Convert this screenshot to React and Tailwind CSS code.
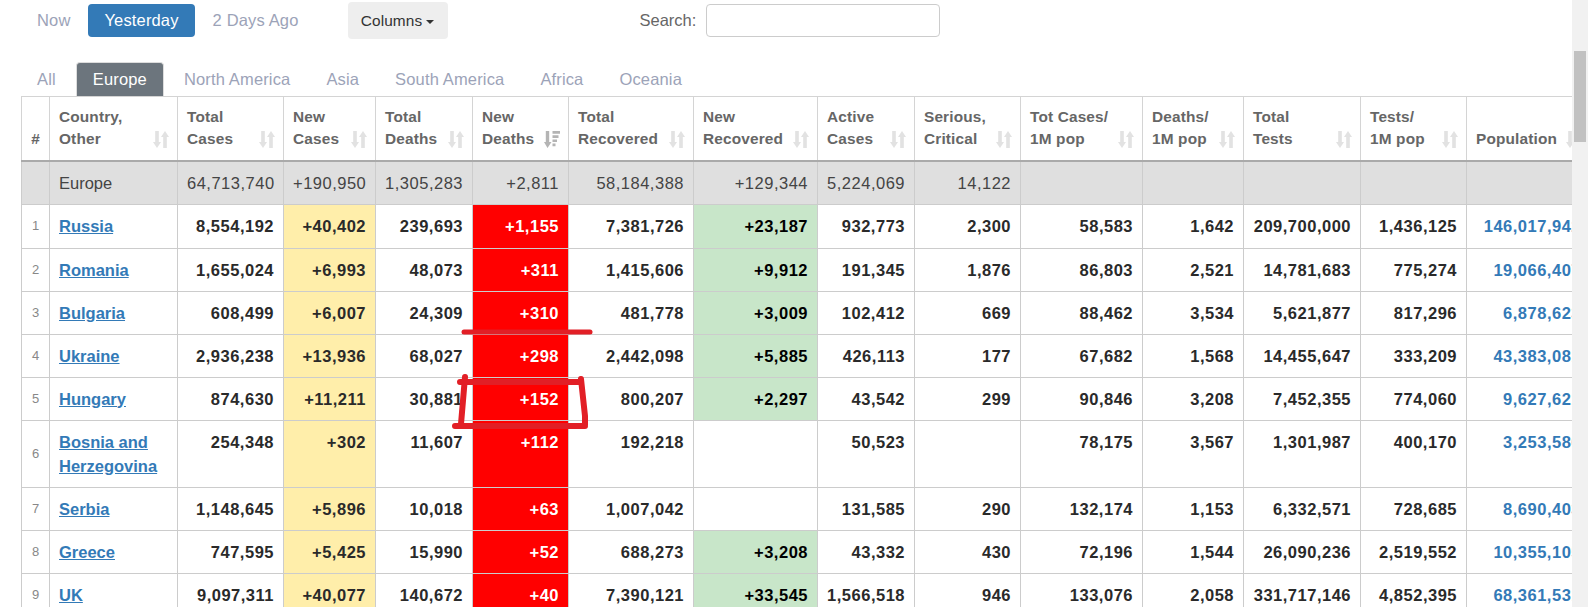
import React from 'react';

const headers = [
  ['Country,', 'Other'],
  ['Total', 'Cases'],
  ['New', 'Cases'],
  ['Total', 'Deaths'],
  ['New', 'Deaths'],
  ['Total', 'Recovered'],
  ['New', 'Recovered'],
  ['Active', 'Cases'],
  ['Serious,', 'Critical'],
  ['Tot Cases/', '1M pop'],
  ['Deaths/', '1M pop'],
  ['Total', 'Tests'],
  ['Tests/', '1M pop'],
  ['', 'Population'],
];

const widths = ['w-[28px]', 'w-[128px]', 'w-[106px]', 'w-[92px]', 'w-[97px]', 'w-[96px]', 'w-[125px]', 'w-[124px]', 'w-[97px]', 'w-[106px]', 'w-[122px]', 'w-[101px]', 'w-[117px]', 'w-[106px]', 'w-[124px]'];

const rows = [
  ['Russia', '8,554,192', '+40,402', '239,693', '+1,155', '7,381,726', '+23,187', '932,773', '2,300', '58,583', '1,642', '209,700,000', '1,436,125', '146,017,942'],
  ['Romania', '1,655,024', '+6,993', '48,073', '+311', '1,415,606', '+9,912', '191,345', '1,876', '86,803', '2,521', '14,781,683', '775,274', '19,066,407'],
  ['Bulgaria', '608,499', '+6,007', '24,309', '+310', '481,778', '+3,009', '102,412', '669', '88,462', '3,534', '5,621,877', '817,296', '6,878,623'],
  ['Ukraine', '2,936,238', '+13,936', '68,027', '+298', '2,442,098', '+5,885', '426,113', '177', '67,682', '1,568', '14,455,647', '333,209', '43,383,081'],
  ['Hungary', '874,630', '+11,211', '30,881', '+152', '800,207', '+2,297', '43,542', '299', '90,846', '3,208', '7,452,355', '774,060', '9,627,621'],
  [['Bosnia and', 'Herzegovina'], '254,348', '+302', '11,607', '+112', '192,218', '', '50,523', '', '78,175', '3,567', '1,301,987', '400,170', '3,253,586'],
  ['Serbia', '1,148,645', '+5,896', '10,018', '+63', '1,007,042', '', '131,585', '290', '132,174', '1,153', '6,332,571', '728,685', '8,690,403'],
  ['Greece', '747,595', '+5,425', '15,990', '+52', '688,273', '+3,208', '43,332', '430', '72,196', '1,544', '26,090,236', '2,519,552', '10,355,105'],
  ['UK', '9,097,311', '+40,077', '140,672', '+40', '7,390,121', '+33,545', '1,566,518', '946', '133,076', '2,058', '331,717,146', '4,852,395', '68,361,531'],
];

const europe = ['Europe', '64,713,740', '+190,950', '1,305,283', '+2,811', '58,184,388', '+129,344', '5,224,069', '14,122', '', '', '', '', ''];

const SortIcon = ({ active }) => (
  <svg viewBox="0 0 16 17" className="w-4 h-[17px] shrink-0 mb-[2px]">
    {active ? (
      <g fill="#b4b4b4">
        <path d="M1.800 0h3.400v11h2.300l-4 6-3.500-6h1.800z" />
        <path d="M8.500 0h7.500v2.700H8.500zM8.500 4.200h6v2.700h-6zM8.500 8.400h4.500v2.700H8.500zM8.500 12.600h3v2.700h-3z" />
      </g>
    ) : (
      <g fill="#e2e2e2">
        <path d="M2.200 0h3.600v11H8l-4 6-4-6h2.200z" />
        <path d="M10.200 17h3.600V6H16l-4-6-4 6h2.200z" />
      </g>
    )}
  </svg>
);

const cellBg = (col, value) => {
  if (col === 2) return 'bg-[#ffeeaa]';
  if (col === 4) return 'bg-[#ff0000] text-white';
  if (col === 6 && value) return 'bg-[#c8e6c9] text-black';
  return '';
};

const tabs = ['North America', 'Asia', 'South America', 'Africa', 'Oceania'];

export default function App() {
  return (
    <div className="flex h-[607px] w-[1588px] overflow-hidden bg-white font-['Liberation_Sans',Arial,sans-serif] text-[16.500px]">
      <div className="relative w-[1572px] shrink-0 overflow-hidden">
        <div className="flex h-[41px] items-center">
          <div className="ml-[21px] flex items-center gap-[2px] tracking-[0.150px] text-[#9ca3b8]">
            <a className="px-4 py-[4px]">Now</a>
            <a className="rounded bg-[#337ab7] px-4 py-[4px] leading-[25px] text-white">Yesterday</a>
            <a className="px-4 py-[4px]">2 Days Ago</a>
          </div>
          <button className="ml-[33px] flex h-[37px] w-[100px] items-center justify-center gap-[4px] rounded bg-[#eeeeee] text-[15.400px] tracking-[0.100px] text-[#333]">
            Columns
            <span className="mt-[2px] border-x-[4px] border-t-[4px] border-x-transparent border-t-[#333]" />
          </button>
          <label className="ml-[192px] text-[#666]">Search:</label>
          <input className="ml-[10px] h-[33px] w-[234px] rounded border border-[#cccccc] bg-white" />
        </div>

        <div className="ml-[21px] mt-[21px] flex h-[34px] items-center gap-[4px] tracking-[0.150px] text-[#9ca3b8]">
          <a className="px-4">All</a>
          <a className="flex h-[34px] items-center rounded-t border border-b-0 border-[#dddddd] bg-[#6c757d] px-4 text-white">Europe</a>
          {tabs.map((tab) => (
            <a key={tab} className="px-4">{tab}</a>
          ))}
        </div>

        <table className="ml-[21px] w-[1570px] table-fixed border-collapse leading-6 text-[#2a2a2a]">
          <colgroup>
            {widths.map((w, i) => <col key={i} className={w} />)}
          </colgroup>
          <thead>
            <tr className="h-[64px]">
              <th className="border border-b-2 border-[#d4d4d4] border-b-[#aaaaaa] pb-[10px] align-bottom text-[15.400px] leading-[22px] text-[#666]">#</th>
              {headers.map((h, i) => (
                <th key={i} className="border border-b-2 border-[#d4d4d4] border-b-[#aaaaaa] pb-[10px] pl-[9px] pr-[8px] text-left align-bottom text-[15.400px] font-bold leading-[22px] tracking-[0.150px] text-[#666]">
                  <div className="flex items-end justify-between">
                    <span className="whitespace-nowrap">{h[0]}<br />{h[1]}</span>
                    <SortIcon active={i === 4} />
                  </div>
                </th>
              ))}
            </tr>
          </thead>
          <tbody>
            <tr className="bg-[#dfdfdf] text-[#444]">
              <td className="border border-[#cccccc]" />
              {europe.map((v, i) => (
                <td key={i} className={i === 0
                  ? 'border border-[#cccccc] px-[9px] py-[9px] text-left'
                  : 'border border-[#cccccc] px-[9px] py-[9px] text-right tracking-[0.500px]'}>{v}</td>
              ))}
            </tr>
            {rows.map((row, r) => (
              <tr key={r} className={r === 0 ? 'h-[44px]' : ''}>
                <td className="border border-[#cccccc] text-center align-middle text-[13px] text-[#888]">{r + 1}</td>
                {row.map((v, i) => {
                  if (i === 0) {
                    return (
                      <td key={i} className="border border-[#cccccc] px-[9px] py-[9px] align-top font-bold text-[#337ab7]">
                        {Array.isArray(v)
                          ? v.map((part) => <div key={part}><a className="underline">{part}</a></div>)
                          : <a className="underline">{v}</a>}
                      </td>
                    );
                  }
                  if (i === 13) {
                    return <td key={i} className="whitespace-nowrap border border-[#cccccc] px-[9px] py-[9px] text-right align-top font-bold tracking-[0.500px] text-[#337ab7]">{v}</td>;
                  }
                  return <td key={i} className={`border border-[#cccccc] px-[9px] py-[9px] text-right align-top font-bold tracking-[0.500px] ${cellBg(i, v)}`}>{v}</td>;
                })}
              </tr>
            ))}
          </tbody>
        </table>

        <svg className="pointer-events-none absolute inset-0 h-[607px] w-[1572px]" viewBox="0 0 1572 607" fill="none" stroke="#e21f26" strokeLinecap="round" strokeLinejoin="round">
          <path d="M464 332H590" strokeWidth="5" />
          <path d="M460 382H581M465 377L461 424M581 379L585 416L585 425M455 426H585" strokeWidth="6" />
        </svg>
      </div>
      <div className="w-4 bg-[#f1f1f1] pt-[51px]">
        <div className="mx-[2px] h-[91px] bg-[#c1c1c1]" />
      </div>
    </div>
  );
}
